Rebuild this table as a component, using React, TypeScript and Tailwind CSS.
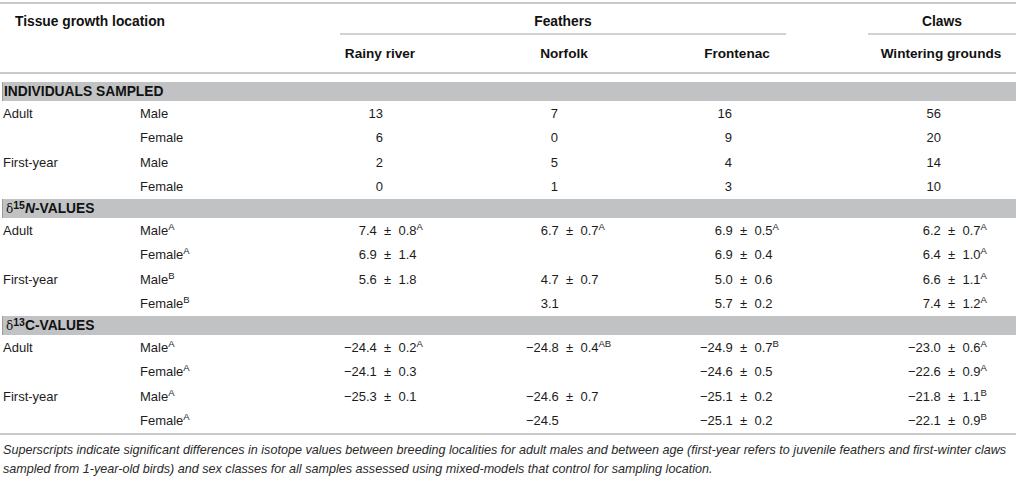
const font = "font-['Liberation_Sans',Arial,sans-serif]"

type Cell = { v: string; s?: string }

type Row = {
    age: string
    sex: string
    sexSup?: string
    cells: Cell[]
    int?: boolean
}

// per column: width of the integer part box (decimal alignment) and of whole-number box
const cols = [
    { dec: "w-[36px]", int: "w-[53px]" },
    { dec: "w-[38px]", int: "w-[48px]" },
    { dec: "w-[32px]", int: "w-[42px]" },
    { dec: "w-[50px]", int: "w-[61px]" },
]

const samples: Row[] = [
    { age: "Adult", sex: "Male", int: true, cells: [{ v: "13" }, { v: "7" }, { v: "16" }, { v: "56" }] },
    { age: "", sex: "Female", int: true, cells: [{ v: "6" }, { v: "0" }, { v: "9" }, { v: "20" }] },
    { age: "First-year", sex: "Male", int: true, cells: [{ v: "2" }, { v: "5" }, { v: "4" }, { v: "14" }] },
    { age: "", sex: "Female", int: true, cells: [{ v: "0" }, { v: "1" }, { v: "3" }, { v: "10" }] },
]

const nitrogen: Row[] = [
    {
        age: "Adult", sex: "Male", sexSup: "A",
        cells: [{ v: "7.4 ± 0.8", s: "A" }, { v: "6.7 ± 0.7", s: "A" }, { v: "6.9 ± 0.5", s: "A" }, { v: "6.2 ± 0.7", s: "A" }],
    },
    {
        age: "", sex: "Female", sexSup: "A",
        cells: [{ v: "6.9 ± 1.4" }, { v: "" }, { v: "6.9 ± 0.4" }, { v: "6.4 ± 1.0", s: "A" }],
    },
    {
        age: "First-year", sex: "Male", sexSup: "B",
        cells: [{ v: "5.6 ± 1.8" }, { v: "4.7 ± 0.7" }, { v: "5.0 ± 0.6" }, { v: "6.6 ± 1.1", s: "A" }],
    },
    {
        age: "", sex: "Female", sexSup: "B",
        cells: [{ v: "" }, { v: "3.1" }, { v: "5.7 ± 0.2" }, { v: "7.4 ± 1.2", s: "A" }],
    },
]

const carbon: Row[] = [
    {
        age: "Adult", sex: "Male", sexSup: "A",
        cells: [{ v: "−24.4 ± 0.2", s: "A" }, { v: "−24.8 ± 0.4", s: "AB" }, { v: "−24.9 ± 0.7", s: "B" }, { v: "−23.0 ± 0.6", s: "A" }],
    },
    {
        age: "", sex: "Female", sexSup: "A",
        cells: [{ v: "−24.1 ± 0.3" }, { v: "" }, { v: "−24.6 ± 0.5" }, { v: "−22.6 ± 0.9", s: "A" }],
    },
    {
        age: "First-year", sex: "Male", sexSup: "A",
        cells: [{ v: "−25.3 ± 0.1" }, { v: "−24.6 ± 0.7" }, { v: "−25.1 ± 0.2" }, { v: "−21.8 ± 1.1", s: "B" }],
    },
    {
        age: "", sex: "Female", sexSup: "A",
        cells: [{ v: "" }, { v: "−24.5" }, { v: "−25.1 ± 0.2" }, { v: "−22.1 ± 0.9", s: "B" }],
    },
]

function Sup({ children }: { children: React.ReactNode }) {
    return <sup className="text-[9.5px] -top-[5px]">{children}</sup>
}

function Value({ cell, col, int }: { cell: Cell; col: number; int?: boolean }) {
    if (!cell.v) return <div />
    if (int) {
        return (
            <div className="flex">
                <span className={`${cols[col].int} text-right`}>{cell.v}</span>
            </div>
        )
    }
    const dot = cell.v.indexOf(".")
    return (
        <div className="flex whitespace-pre">
            <span className={`${cols[col].dec} text-right`}>{cell.v.slice(0, dot)}</span>
            <span>
                {cell.v.slice(dot).replace(" ± ", "  ±  ")}
                {cell.s && <Sup>{cell.s}</Sup>}
            </span>
        </div>
    )
}

function SectionBar({ children }: { children: React.ReactNode }) {
    return (
        <div className="ml-[2px] h-[19px] bg-[#c1c2c4] border-l border-[#9a9b9d] flex items-center pl-[1px] text-[13.8px] font-bold text-[#111]">
            {children}
        </div>
    )
}

function Rows({ rows }: { rows: Row[] }) {
    return (
        <div>
            {rows.map((r, i) => (
                <div key={i} className="grid grid-cols-[140px_190px_180px_180px_190px_136px] h-[24.5px] items-center">
                    <div className="pl-[3px]">{r.age}</div>
                    <div>
                        {r.sex}
                        {r.sexSup && <Sup>{r.sexSup}</Sup>}
                    </div>
                    {r.cells.map((c, j) => (
                        <Value key={j} cell={c} col={j} int={r.int} />
                    ))}
                </div>
            ))}
        </div>
    )
}

export default function App() {
    return (
        <div className={`${font} w-[1016px] h-[488px] bg-white text-[13px] text-[#1c1c1c] leading-none`}>
            <div className="h-[2px]" />
            <div className="h-[2px] bg-[#c9c9c9]" />

            {/* header */}
            <div className="grid grid-cols-[340px_446px_82px_148px] h-[31px] text-[13.8px] font-bold text-[#111]">
                <div className="pl-[15px] pt-[11px]">Tissue growth location</div>
                <div className="border-b-2 border-[#d2d2d2] text-center pt-[11px]">Feathers</div>
                <div />
                <div className="border-b-2 border-[#d2d2d2] text-center pt-[11px]">Claws</div>
            </div>
            <div className="grid grid-cols-[300px_160px_208px_138px_60px_150px] h-[37px] items-center text-[13.6px] font-bold text-[#111]">
                <div />
                <div className="text-center">Rainy river</div>
                <div className="text-center">Norfolk</div>
                <div className="text-center">Frontenac</div>
                <div />
                <div className="text-center">Wintering grounds</div>
            </div>
            <div className="h-[2px] bg-[#c9c9c9]" />
            <div className="h-[8px]" />

            <SectionBar>INDIVIDUALS SAMPLED</SectionBar>
            <Rows rows={samples} />

            <SectionBar>
                <span className="font-['DejaVu_Serif',serif] font-normal text-[12px] ml-[2px]">δ</span>
                <sup className="text-[10.5px] -top-[4px]">15</sup>
                <i>N</i>-VALUES
            </SectionBar>
            <Rows rows={nitrogen} />

            <SectionBar>
                <span className="font-['DejaVu_Serif',serif] font-normal text-[12px] ml-[2px]">δ</span>
                <sup className="text-[10.5px] -top-[4px]">13</sup>
                C-VALUES
            </SectionBar>
            <Rows rows={carbon} />

            <div className="h-[2px] bg-[#c9c9c9]" />
            <p className="pl-[3px] pt-[6px] italic text-[12.6px] leading-[19px] text-[#2a2a2a]">
                Superscripts indicate significant differences in isotope values between breeding localities for adult males and between age (first-year refers to juvenile feathers and first-winter claws
                <br />
                sampled from 1-year-old birds) and sex classes for all samples assessed using mixed-models that control for sampling location.
            </p>
        </div>
    )
}
